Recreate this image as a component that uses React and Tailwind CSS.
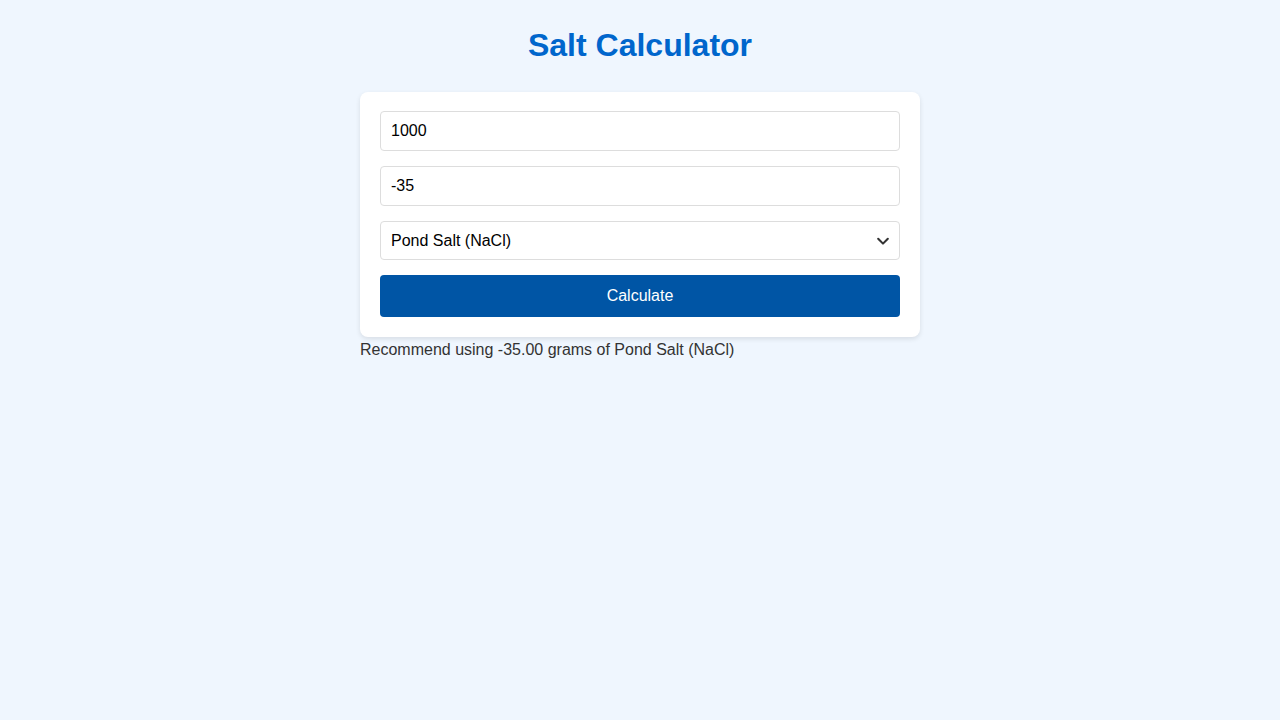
import React, { useState } from 'react';

const App = () => {
  const [volume, setVolume] = useState('1000');
  const [salinity, setSalinity] = useState('-35');
  const [salt, setSalt] = useState('Pond Salt (NaCl)');
  const [result, setResult] = useState('Recommend using -35.00 grams of Pond Salt (NaCl)');

  const handleCalculate = () => {
    const grams = (parseFloat(volume) || 0) * (parseFloat(salinity) || 0) / 1000;
    setResult(`Recommend using ${grams.toFixed(2)} grams of ${salt}`);
  };

  return (
    <div className="min-h-screen bg-[#eff6fe] font-['Liberation_Sans',Arial,sans-serif] text-[#333]">
      <div className="w-[560px] mx-auto pt-[27px]">
        <h1 className="text-[32px] leading-[37px] font-bold text-center text-[#0066cc]">Salt Calculator</h1>

        <div className="mt-[28px] bg-white rounded-lg shadow-[0_2px_5px_rgba(0,0,0,0.1)] px-5 pt-[19px] pb-5 flex flex-col gap-[15px]">
          <input
            type="text"
            value={volume}
            onChange={(e) => setVolume(e.target.value)}
            className="h-10 w-full border border-[#ddd] rounded px-[10px] text-base text-black outline-none"
          />
          <input
            type="text"
            value={salinity}
            onChange={(e) => setSalinity(e.target.value)}
            className="h-10 w-full border border-[#ddd] rounded px-[10px] text-base text-black outline-none"
          />
          <div className="relative">
            <select
              value={salt}
              onChange={(e) => setSalt(e.target.value)}
              className="h-[39px] w-full appearance-none bg-white border border-[#ddd] rounded px-[10px] text-base text-black outline-none"
            >
              <option>Pond Salt (NaCl)</option>
              <option>Sea Salt</option>
              <option>Epsom Salt</option>
            </select>
            <svg
              className="absolute right-[10px] top-1/2 -translate-y-1/2 pointer-events-none"
              width="14"
              height="14"
              viewBox="0 0 16 16"
              fill="none"
              stroke="#333"
              strokeWidth="2.4"
              strokeLinecap="round"
              strokeLinejoin="round"
            >
              <path d="M2.5 5.5 8 11l5.5-5.5" />
            </svg>
          </div>
          <button
            type="button"
            onClick={handleCalculate}
            className="h-[42px] w-full bg-[#0055a5] text-white rounded text-base"
          >
            Calculate
          </button>
        </div>

        <p className="mt-[4px] text-base leading-[18px]">{result}</p>
      </div>
    </div>
  );
};

export default App;
